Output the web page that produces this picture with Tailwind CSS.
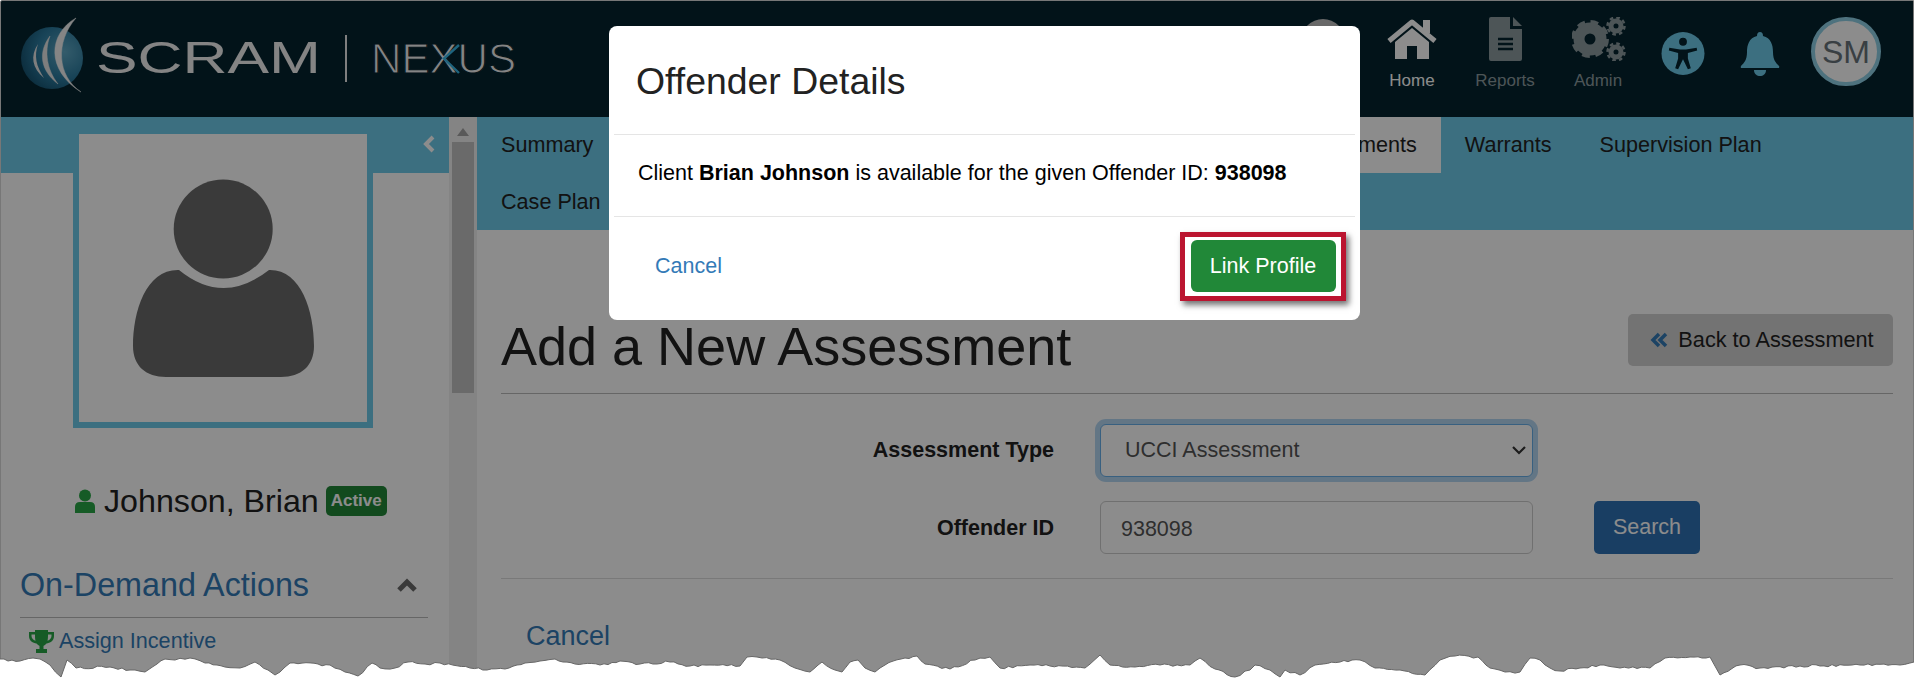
<!DOCTYPE html>
<html lang="en">
<head>
    <meta charset="UTF-8" />
    <title>SCRAM Nexus - Add a New Assessment</title>
    <script src="https://cdn.jsdelivr.net/npm/@tailwindcss/browser@4"></script>
</head>
<body class="bg-white overflow-hidden">
<div class="relative w-[1918px] h-[697px] overflow-hidden bg-white font-['Liberation_Sans',Arial,sans-serif] text-[#222]">

    <!-- page -->
    <div class="relative w-[1914px] h-[697px] flex flex-col border border-[#777] rounded-tl-[2px] overflow-hidden">

        <!-- header -->
        <header class="h-[116px] shrink-0 bg-[#05242f] flex pr-[19px]">
            <svg class="ml-[19px] mt-[16px] w-[510px] h-[80px]" viewBox="20 17 510 80">
                <defs>
                    <radialGradient id="ball" cx="0.7" cy="0.4" r="0.8">
                        <stop offset="0" stop-color="#5fa8c4"/>
                        <stop offset="0.55" stop-color="#2b7a9e"/>
                        <stop offset="1" stop-color="#124a66"/>
                    </radialGradient>
                </defs>
                <ellipse cx="52" cy="58" rx="31" ry="31" fill="url(#ball)"/>
                <path d="M76 18 C48 34 46 70 81 92 C57 76 55 42 76 18Z" fill="#f2f2f2" stroke="#f2f2f2" stroke-width="0.5"/>
                <path d="M50 36 C38 52 40 70 58 84 C47 70 44 52 50 36Z" fill="#e5e5e5" stroke="#e5e5e5" stroke-width="0.5"/>
                <path d="M38 44 C30 56 32 68 44 78 C36 66 34 56 38 44Z" fill="#e5e5e5"/>
                <text x="96" y="73" font-family="Liberation Sans" font-size="44" fill="#f0f0f0" textLength="225" lengthAdjust="spacingAndGlyphs">SCRAM</text>
                <rect x="345" y="35" width="2" height="47" fill="#e8e8e8"/>
                <text x="371" y="73" font-family="Liberation Sans" font-size="43" fill="#f0f0f0" stroke="#05242f" stroke-width="1.1" textLength="145" lengthAdjust="spacingAndGlyphs">NEXUS</text>
                <path d="M459 45 L444 58.500 L459 73" stroke="#38b6e6" stroke-width="2.400" fill="none"/>
            </svg>

            <nav class="ml-auto flex">
                <div class="w-[86px] flex justify-center pt-[18px]">
                    <div class="w-[44px] h-[44px] rounded-full bg-[#bdbdbd]"></div>
                </div>
                <a class="w-[92px] flex flex-col items-center pt-[17px] text-white">
                    <svg class="w-[50px] h-[41px]" viewBox="0 0 50 41" fill="#fff">
                        <rect x="36" y="2" width="7" height="13"/>
                        <path d="M2 23 L25 4 L48 23" fill="none" stroke="#fff" stroke-width="5" stroke-linejoin="round"/>
                        <path d="M8 24 L25 10 L42 24 V41 H30 V28 H20 V41 H8Z"/>
                    </svg>
                    <span class="mt-[12px] text-[17px] leading-[20px]">Home</span>
                </a>
                <a class="w-[94px] flex flex-col items-center pt-[16px] text-[#8c9b9f]">
                    <svg class="w-[33px] h-[44px]" viewBox="0 0 33 44">
                        <path d="M2 0 H21 V12 H33 V42 Q33 44 31 44 H2 Q0 44 0 42 V2 Q0 0 2 0Z" fill="#8c9b9f"/>
                        <path d="M24 0 L33 9 H24Z" fill="#8c9b9f"/>
                        <path d="M9 22 H24 M9 27 H24 M9 32 H24" stroke="#05242f" stroke-width="2.5"/>
                    </svg>
                    <span class="mt-[10px] text-[17px] leading-[20px]">Reports</span>
                </a>
                <a class="w-[92px] flex flex-col items-center pt-[16px] text-[#8c9b9f]">
                    <svg class="w-[56px] h-[44px] ml-[4px]" viewBox="0 0 56 44" fill="none" stroke="#8c9b9f">
                        <circle cx="18" cy="22" r="11" stroke-width="11"/>
                        <circle cx="18" cy="22" r="16.5" stroke-width="5" stroke-dasharray="7.500 5.460"/>
                        <circle cx="44" cy="9" r="5" stroke-width="5"/>
                        <circle cx="44" cy="9" r="8.5" stroke-width="2.500" stroke-dasharray="3.600 3.070"/>
                        <circle cx="44" cy="35" r="5" stroke-width="5"/>
                        <circle cx="44" cy="35" r="8.5" stroke-width="2.500" stroke-dasharray="3.600 3.070"/>
                    </svg>
                    <span class="mt-[10px] text-[17px] leading-[20px]">Admin</span>
                </a>
                <a class="w-[78px] flex justify-center pt-[31px]">
                    <svg class="w-[44px] h-[43px]" viewBox="0 0 44 44">
                        <circle cx="22" cy="22" r="22" fill="#6dcae9"/>
                        <circle cx="22" cy="10" r="4" fill="#05242f"/>
                        <path d="M8 16 L19 18 H25 L36 16 L36.500 19 L27 21.500 L27 27 L30 37 L27 38 L22 28 L17 38 L14 37 L17 27 L17 21.500 L7.500 19Z" fill="#05242f"/>
                    </svg>
                </a>
                <a class="w-[76px] flex justify-center pt-[31px]">
                    <svg class="w-[40px] h-[44px]" viewBox="0 0 40 44" fill="#6dcae9">
                        <path d="M20 0 Q23 0 23 4 C31 6 33 13 33 20 C33 28 36 31 39 34 Q40 36 38 36 H2 Q0 36 1 34 C4 31 7 28 7 20 C7 13 9 6 17 4 Q17 0 20 0Z"/>
                        <path d="M14 38 H26 C26 46 14 46 14 38Z"/>
                    </svg>
                </a>
                <a class="w-[96px] flex justify-center pt-[16px]">
                    <div class="w-[70px] h-[69px] rounded-full bg-white border-[4px] border-[#8fd0e6] flex items-center justify-center text-[32px] text-[#68737a]">SM</div>
                </a>
            </nav>
        </header>

        <div class="flex flex-1 min-h-0">
            <!-- sidebar -->
            <aside class="w-[448px] shrink-0 bg-white flex flex-col">
                <div class="h-[56px] shrink-0 bg-[#6dcae9] flex items-center justify-end pr-[14px]">
                    <svg class="w-[12px] h-[18px] -mt-[2px]" viewBox="0 0 12 18" fill="none" stroke="#fff" stroke-width="4"><path d="M10 2 L3 9 L10 16"/></svg>
                </div>
                <div class="relative w-[300px] h-[300px] -mt-[45px] ml-[72px] bg-white border-[6px] border-[#6dcae9]">
                    <svg class="absolute left-[-78px] top-[-134px] w-[448px] h-[510px]" viewBox="0 0 448 510" fill="#6b6b6b">
                        <circle cx="222.200" cy="229" r="49.500"/>
                        <path d="M178 270 Q200 288 222.700 288 Q245 288 268 270 C300 269 313 311 313 346 C313 366 300 377 280 377 H165 C145 377 132 366 132 346 C132 311 145 269 178 270Z"/>
                    </svg>
                </div>
                <div class="mt-[55px] ml-[74px] flex items-center h-[36px]">
                    <svg class="w-[20px] h-[24px]" viewBox="0 0 20 24" fill="#28a745">
                        <circle cx="10" cy="6.500" r="6"/>
                        <path d="M0 24 V18 Q0 13 5 13 H15 Q20 13 20 18 V24Z"/>
                    </svg>
                    <span class="ml-[9px] text-[32.200px] leading-[36px] text-[#222]">Johnson, Brian</span>
                    <span class="ml-[7px] w-[61px] h-[30px] rounded-[5px] bg-[#218838] text-white font-bold text-[17px] flex items-center justify-center">Active</span>
                </div>
                <div class="mt-[46px] ml-[19px] w-[408px] h-[53px] flex items-start justify-between border-b border-[#bbb]">
                    <h3 class="text-[32.300px] leading-[40px] text-[#337ab7]">On-Demand Actions</h3>
                    <svg class="w-[20px] h-[14px] mt-[13px] mr-[11px]" viewBox="0 0 20 14" fill="none" stroke="#6b6b6b" stroke-width="5"><path d="M2 12 L10 4 L18 12"/></svg>
                </div>
                <a class="mt-[10px] ml-[28px] flex items-center text-[#337ab7] text-[21.600px] leading-[26px]">
                    <svg class="w-[25px] h-[23px]" viewBox="0 0 25 23" fill="#28a745">
                        <path d="M6 0 H19 V2 H25 V6 C25 11 21 13 17.500 13.500 C16 15 15 15.500 14.500 16 V19 H18 V23 H7 V19 H10.500 V16 C10 15.500 9 15 7.500 13.500 C4 13 0 11 0 6 V2 H6Z M2.500 4.500 V6 C2.500 8 4 10 6.500 10.800 C6 9 6 6.500 6 4.500Z M22.500 4.500 H19 C19 6.500 19 9 18.500 10.800 C21 10 22.500 8 22.500 6Z" fill-rule="evenodd"/>
                    </svg>
                    <span class="ml-[5px]">Assign Incentive</span>
                </a>
            </aside>

            <!-- scrollbar -->
            <div class="w-[28px] shrink-0 bg-[#f1f1f1] flex flex-col items-center">
                <svg class="mt-[11px] w-[12px] h-[8px]" viewBox="0 0 12 8" fill="#a3a3a3"><path d="M6 0 L12 8 H0Z"/></svg>
                <div class="mt-[6px] w-[22px] h-[251px] bg-[#c1c1c1]"></div>
            </div>

            <!-- main -->
            <main class="flex-1 min-w-0 bg-white flex flex-col">
                <div class="h-[113px] shrink-0 bg-[#6dcae9] text-[21.600px] leading-[26px] text-[#222]">
                    <div class="flex h-[56px]">
                        <a class="px-[24px] flex items-center">Summary</a>
                        <div class="w-[647px]"></div>
                        <a class="px-[24px] flex items-center bg-white">Assessments</a>
                        <a class="px-[24px] flex items-center">Warrants</a>
                        <a class="px-[24px] flex items-center">Supervision Plan</a>
                    </div>
                    <div class="flex h-[57px]">
                        <a class="px-[24px] flex items-center">Case Plan</a>
                    </div>
                </div>

                <div class="pl-[24px] pr-[20px]">
                    <div class="h-[164px] flex items-start justify-between border-b border-[#bbb]">
                        <h1 class="mt-[87px] text-[54px] leading-[58px] text-[#222]">Add a New Assessment</h1>
                        <a class="mt-[84px] w-[265px] h-[52px] pl-[3px] rounded-[5px] bg-[#d1d1d1] flex items-center justify-center text-[21.700px] text-[#222]">
                            <svg class="w-[18px] h-[16px] mr-[10px]" viewBox="0 0 18 16" fill="none" stroke="#337ab7" stroke-width="3.500"><path d="M9 2 L3 8 L9 14 M16 2 L10 8 L16 14"/></svg>
                            Back to Assessment
                        </a>
                    </div>

                    <div class="h-[185px] border-b border-[#ddd] pt-[30px] text-[21.500px]">
                        <div class="flex items-center h-[53px]">
                            <label class="w-[553px] text-right font-bold text-[#222]">Assessment Type</label>
                            <div class="relative ml-[46px] w-[433px] h-[53px]">
                                <select class="appearance-none w-full h-full pl-[24px] rounded-[6px] border border-[#66afe9] ring-[5px] ring-[#b5d7f3] bg-white text-[#555] outline-none">
                                    <option>UCCI Assessment</option>
                                </select>
                                <svg class="absolute right-[7px] top-[21px] w-[14px] h-[10px]" viewBox="0 0 14 10" fill="none" stroke="#333" stroke-width="2.200"><path d="M1 2 L7 8 L13 2"/></svg>
                            </div>
                        </div>
                        <div class="flex items-center h-[53px] mt-[24px]">
                            <label class="w-[553px] pt-[1px] text-right font-bold text-[#222]">Offender ID</label>
                            <input class="ml-[46px] w-[433px] h-[53px] pl-[20px] pt-[3px] rounded-[6px] border border-[#ccc] bg-white text-[#555] outline-none" value="938098" />
                            <button class="ml-[61px] w-[106px] h-[53px] rounded-[5px] bg-[#2f72b4] text-white">Search</button>
                        </div>
                    </div>

                    <a class="block mt-[40px] ml-[25px] text-[27px] leading-[34px] text-[#337ab7]">Cancel</a>
                </div>
            </main>
        </div>

        <!-- modal backdrop -->
        <div class="absolute inset-0 bg-black/45"></div>
    </div>

    <!-- modal -->
    <div class="absolute left-[609px] top-[26px] w-[751px] h-[294px] bg-white rounded-[8px] flex flex-col text-[#222]">
        <div class="h-[109px] mx-[5px] pt-[2px] border-b border-[#e5e5e5] flex items-center pl-[22px]">
            <h4 class="text-[37.400px] leading-[44px]">Offender Details</h4>
        </div>
        <div class="h-[82px] mx-[5px] pb-[5px] border-b border-[#e5e5e5] flex items-center pl-[24px] text-[21.500px] text-black">
            <p>Client <b>Brian Johnson</b> is available for the given Offender ID: <b>938098</b></p>
        </div>
        <div class="flex-1 flex items-center justify-between pb-[5px] pl-[46px] pr-[14px]">
            <a class="text-[21.500px] text-[#337ab7]">Cancel</a>
            <div class="w-[166px] h-[69px] border-[5px] border-[#bb1530] flex items-center justify-center shadow-[3px_4px_6px_rgba(0,0,0,0.55)]">
                <button class="w-[145px] h-[52px] rounded-[6px] bg-[#218838] text-white text-[21.500px]">Link Profile</button>
            </div>
        </div>
    </div>

    <!-- torn paper edge -->
    <svg class="absolute left-0 top-0 w-[1918px] h-[697px] pointer-events-none" viewBox="0 0 1918 697">
        <path id="tearFill" fill="#fff"></path>
        <path id="tearLine" fill="none" stroke="#666" stroke-width="1"></path>
    </svg>
</div>

<script>
    // rough outline of the tear, roughened below with small fixed jitter
    const tear = [[0,659],[20,661],[33,658],[40,659],[50,665],[61,677],[67,660],[76,668],[110,667],[130,670],[145,672],[157,664],[165,659],[175,660],[190,658],[205,663],[225,667],[240,668],[255,662],[268,670],[275,675],[290,663],[330,665],[345,672],[358,676],[372,663],[380,668],[395,668],[408,662],[425,664],[440,663],[470,668],[487,670],[505,669],[525,663],[540,661],[555,659],[575,664],[600,665],[620,661],[640,664],[670,662],[690,666],[710,665],[740,666],[747,657],[762,658],[780,660],[795,668],[810,672],[822,662],[835,670],[842,672],[850,662],[858,660],[865,668],[875,672],[885,665],[905,658],[917,656],[925,664],[950,669],[975,660],[990,657],[1000,668],[1030,665],[1050,666],[1085,668],[1100,655],[1110,665],[1135,667],[1160,665],[1190,665],[1200,658],[1215,669],[1235,677],[1250,670],[1255,665],[1270,670],[1280,677],[1285,670],[1300,675],[1315,665],[1340,662],[1360,660],[1375,668],[1400,670],[1425,675],[1440,660],[1455,656],[1478,657],[1490,668],[1505,672],[1520,672],[1530,658],[1540,660],[1550,668],[1560,671],[1580,668],[1600,665],[1620,668],[1650,668],[1665,658],[1690,657],[1710,657],[1720,675],[1740,665],[1760,668],[1800,666],[1860,665],[1900,665],[1914,662]];

    let line = '';
    let seed = 7;
    tear.forEach(function (p, i) {
        if (i > 0) {
            const prev = tear[i - 1];
            const steps = Math.floor((p[0] - prev[0]) / 4);
            for (let s = 1; s < steps; s++) {
                seed = (seed * 31 + 11) % 97;
                const t = s / steps;
                const x = prev[0] + (p[0] - prev[0]) * t;
                const y = prev[1] + (p[1] - prev[1]) * t + (seed / 97 - 0.5) * 2.4;
                line += ' L' + x.toFixed(1) + ' ' + y.toFixed(1);
            }
        }
        line += (i === 0 ? 'M' : ' L') + p[0] + ' ' + p[1];
    });
    document.getElementById('tearLine').setAttribute('d', line);
    document.getElementById('tearFill').setAttribute('d', line + ' V700 H0Z');
</script>
</body>
</html>
